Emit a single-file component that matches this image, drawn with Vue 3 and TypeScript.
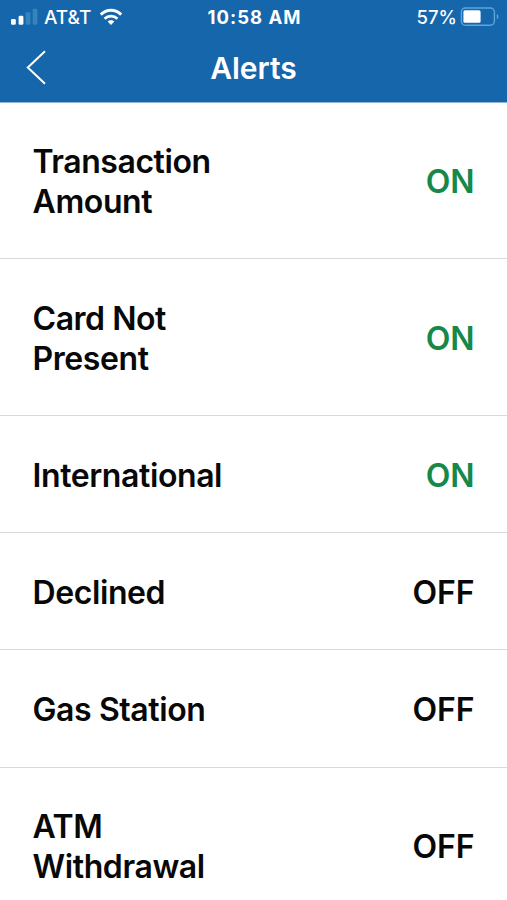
<script setup lang="ts">
interface AlertItem {
  id: string
  lines: string[]
  on: boolean
}

const alerts: AlertItem[] = [
  { id: 'transaction', lines: ['Transaction', 'Amount'], on: true },
  { id: 'card', lines: ['Card Not', 'Present'], on: true },
  { id: 'international', lines: ['International'], on: true },
  { id: 'declined', lines: ['Declined'], on: false },
  { id: 'gas', lines: ['Gas Station'], on: false },
  { id: 'atm', lines: ['ATM', 'Withdrawal'], on: false },
]
</script>

<template>
  <main class="screen">
    <header class="header">
      <div class="status">
        <div class="carrier">
          <svg class="signal" width="28" height="18" viewBox="0 0 28 18">
            <rect x="1" y="12" width="4.8" height="5.7" rx="1.3" fill="#fff" />
            <rect x="8.6" y="8.7" width="4.8" height="9" rx="1.3" fill="#fff" />
            <rect x="15.7" y="5.2" width="4.7" height="12.5" rx="1.3" fill="#3584bd" />
            <rect x="22.7" y="1.7" width="4.7" height="16" rx="1.3" fill="#3584bd" />
          </svg>
          <span class="network">AT&amp;T</span>
          <svg class="wifi" width="24" height="18" viewBox="0 0 24 18">
            <path d="M1.8 6.6C7.5 .9 16.5 .9 22.2 6.6" fill="none" stroke="#fff" stroke-width="3" />
            <path d="M5.6 10.7C9.2 7.2 14.8 7.2 18.4 10.7" fill="none" stroke="#fff" stroke-width="2.8" />
            <path d="M8.6 13.5C10.5 11.7 13.5 11.7 15.4 13.5L12 17Z" fill="#fff" />
          </svg>
        </div>
        <span class="time">10:58 AM</span>
        <div class="power">
          <span class="percent">57%</span>
          <svg class="battery" width="39" height="20" viewBox="0 0 39 20">
            <rect x="1.4" y="1" width="33" height="17.3" rx="4" fill="none" stroke="#5ba6dc" stroke-width="1.4" />
            <rect x="3.4" y="3.3" width="17.2" height="12.5" rx="1.6" fill="#fff" />
            <path d="M36.8 7C39 8 39 11.3 36.8 12.3Z" fill="#5ba6dc" />
          </svg>
        </div>
      </div>
      <nav class="nav">
        <button class="back" aria-label="Back">
          <svg width="20" height="36" viewBox="0 0 20 36">
            <path d="M19 1.3L1.8 17.5L19 33.7" fill="none" stroke="#fff" stroke-width="2" />
          </svg>
        </button>
        <h1 class="title">Alerts</h1>
      </nav>
    </header>
    <ul class="list">
      <li v-for="item in alerts" :key="item.id" class="row">
        <div class="label">
          <span v-for="line in item.lines" :key="line" class="line">{{ line }}</span>
        </div>
        <span class="state" :class="{ on: item.on }">{{ item.on ? 'ON' : 'OFF' }}</span>
      </li>
    </ul>
  </main>
</template>

<style>
body {
  margin: 0;
  background: #fff;
}
</style>

<style scoped>
.screen {
  width: 507px;
  height: 900px;
  overflow: hidden;
  background: #fff;
  color: #080808;
  font-family: Inter, 'Liberation Sans', sans-serif;
}
.header {
  height: 102px;
  background: #1566ab;
  box-shadow: 0 1px 0 #8ab4da;
  color: #fff;
}
.status {
  display: grid;
  grid-template-columns: 1fr auto 1fr;
  align-items: center;
  height: 34px;
  padding: 0 8px 0 10px;
}
.carrier,
.power {
  display: flex;
  align-items: center;
}
.power {
  justify-content: flex-end;
}
.signal {
  margin-top: -2px;
}
.network {
  margin-left: 6px;
  font-size: 19px;
  font-weight: 500;
}
.wifi {
  margin-left: 8px;
}
.time {
  font-size: 18.5px;
  font-weight: 700;
  letter-spacing: 1px;
}
.percent {
  margin-right: 3px;
  font-size: 18.5px;
  font-weight: 500;
}
.nav {
  display: grid;
  grid-template-columns: 60px 1fr 60px;
  align-items: center;
  height: 67px;
}
.back {
  display: flex;
  padding: 0 0 0 26px;
  border: 0;
  background: none;
}
.title {
  margin: 0;
  text-align: center;
  font-size: 30px;
  font-weight: 600;
  letter-spacing: 0;
}
.list {
  margin: 0;
  padding: 0;
  list-style: none;
}
.row {
  display: flex;
  align-items: center;
  justify-content: space-between;
  padding: 39.8px 32.5px 36.6px;
  border-bottom: 1px solid #dadada;
  line-height: 39.8px;
  font-size: 32px;
  font-weight: 600;
  letter-spacing: -0.4px;
}
.line {
  display: block;
}
.line:first-child:not(:last-child) {
  letter-spacing: -0.45px;
}
.state {
  letter-spacing: -0.1px;
}
.on {
  color: #168849;
}
</style>
